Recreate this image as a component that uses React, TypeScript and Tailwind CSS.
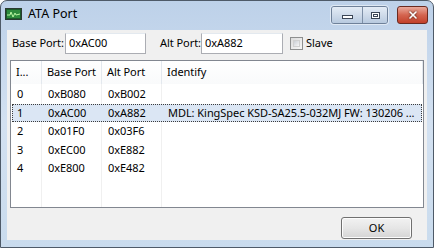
import { X } from 'lucide-react';

const rows = [
  { idx: '0', base: '0xB080', alt: '0xB002', ident: '' },
  { idx: '1', base: '0xAC00', alt: '0xA882', ident: 'MDL: KingSpec KSD-SA25.5-032MJ FW: 130206 ...' },
  { idx: '2', base: '0x01F0', alt: '0x03F6', ident: '' },
  { idx: '3', base: '0xEC00', alt: '0xE882', ident: '' },
  { idx: '4', base: '0xE800', alt: '0xE482', ident: '' },
];

function AppIcon() {
  return (
    <svg width="17" height="12" viewBox="0 0 17 12">
      <rect x="0.5" y="0.5" width="16" height="11" fill="#1d5a2a" stroke="#2b3a30" />
      <rect x="2" y="2" width="13" height="8" fill="#2e8b3c" />
      <polyline points="2,7 5,7 6,4 8,9 10,5 11,7 15,6" fill="none" stroke="#b8f5a0" strokeWidth="1" />
    </svg>
  );
}

export default function App() {
  return (
    <div className="w-[434px] h-[248px] overflow-hidden bg-white font-['Segoe_UI','Noto_Sans',sans-serif] text-[11px] tracking-[-0.05px] text-black whitespace-nowrap">
      <div className="w-full h-full flex flex-col rounded-t-[7px] border border-[#4e5a68] bg-gradient-to-b from-[#bdd1e9] via-[#d3e1f1] to-[#c9dbed]">
        {/* title bar */}
        <div className="h-[29px] flex items-start pl-[4px] pr-[5px]">
          <div className="mt-[7px] flex items-center gap-[6px]">
            <AppIcon />
            <span className="text-[12.5px] tracking-normal leading-none text-black">ATA Port</span>
          </div>
          <div className="ml-auto mt-[5px] flex items-start">
            <div className="flex rounded-[3px] border border-[#6f8199] overflow-hidden shadow-[0_0_0_1px_rgba(255,255,255,0.5)]">
              <div className="w-[31px] h-[16px] flex items-center justify-center bg-gradient-to-b from-[#e4ecf6] via-[#cfdbea] to-[#b8cadf] border-r border-[#7d8fa6]">
                <div className="w-[11px] h-[4px] bg-white border border-[#3b4656] mt-[3px]" />
              </div>
              <div className="w-[24px] h-[16px] flex items-center justify-center bg-gradient-to-b from-[#e4ecf6] via-[#cfdbea] to-[#b8cadf]">
                <div className="w-[9px] h-[7px] border border-[#3b4656] bg-white flex items-center justify-center">
                  <div className="w-[5px] h-[3px] border border-[#3b4656]" />
                </div>
              </div>
            </div>
            <div className="ml-[9px] w-[31px] h-[18px] rounded-[3px] border border-[#6b2a20] bg-gradient-to-b from-[#e9a99c] via-[#d4644f] to-[#c2402a] flex items-center justify-center">
              <X size={12} strokeWidth={3.2} className="text-white drop-shadow-[0_0_1px_#3a1a12]" />
            </div>
          </div>
        </div>

        {/* client area */}
        <div className="mx-[6px] h-[210px] bg-[#f0f0f0] flex flex-col">
          <div className="mt-[2px] h-[22px] flex items-center pl-[5px]">
            <span className="w-[53px]">Base Port:</span>
            <div className="w-[81px] h-[21px] bg-white border border-[#abadb3] border-t-[#e3e9ef] flex items-center pl-[3px]">0xAC00</div>
            <span className="ml-[14px] w-[41px]">Alt Port:</span>
            <div className="w-[82px] h-[21px] bg-white border border-[#abadb3] border-t-[#e3e9ef] flex items-center pl-[3px]">0xA882</div>
            <div className="ml-[7px] w-[13px] h-[13px] border border-[#8e8f8f] bg-gradient-to-br from-[#dcdcdc] to-[#f7f7f7] p-[2px]">
              <div className="w-full h-full border border-[#d0d0d0] bg-gradient-to-br from-[#cbcfd5] to-[#f6f6f6]" />
            </div>
            <span className="ml-[3px]">Slave</span>
          </div>

          {/* list view */}
          <div className="mt-[6px] mx-[3px] h-[148px] border border-[#828790] bg-white flex flex-col overflow-hidden">
            <div className="h-[23px] flex items-center bg-gradient-to-b from-white to-[#f9fafb] shrink-0">
              <div className="w-[31px] pl-[5px] h-full flex items-center border-r border-[#e3e8ee]">I...</div>
              <div className="w-[60px] pl-[5px] h-full flex items-center border-r border-[#e3e8ee]">Base Port</div>
              <div className="w-[60px] pl-[5px] h-full flex items-center border-r border-[#e3e8ee]">Alt Port</div>
              <div className="flex-1 pl-[5px] h-full flex items-center border-r border-[#e3e8ee]">Identify</div>
            </div>
            <div className="relative flex-1 pt-[1px]">
              <div className="absolute inset-0 flex pointer-events-none">
                <div className="w-[31px] border-r border-[#f0f0f0]" />
                <div className="w-[60px] border-r border-[#f0f0f0]" />
                <div className="w-[60px] border-r border-[#f0f0f0]" />
              </div>
              {rows.map((r) => (
                <div
                  key={r.idx}
                  className={
                    r.idx === '1'
                      ? 'relative h-[18.5px] flex items-center bg-[#dbe6f4] border border-dotted border-[#3c3c3c] mx-[1px]'
                      : 'relative h-[18.5px] flex items-center border border-transparent mx-[1px]'
                  }
                >
                  <div className="w-[30px] pl-[4px]">{r.idx}</div>
                  <div className="w-[60px] pl-[5px]">{r.base}</div>
                  <div className="w-[60px] pl-[5px]">{r.alt}</div>
                  <div className="flex-1 pl-[5px] overflow-hidden">{r.ident}</div>
                </div>
              ))}
            </div>
          </div>

          <div className="mt-[9px] mr-[15px] self-end w-[71px] h-[22px] rounded-[3px] border border-[#707070] bg-gradient-to-b from-[#f2f2f2] via-[#e6e6e6] to-[#d4d4d4] flex items-center justify-center shadow-[inset_0_0_0_1px_#fcfcfc]">
            OK
          </div>
        </div>
      </div>
    </div>
  );
}
